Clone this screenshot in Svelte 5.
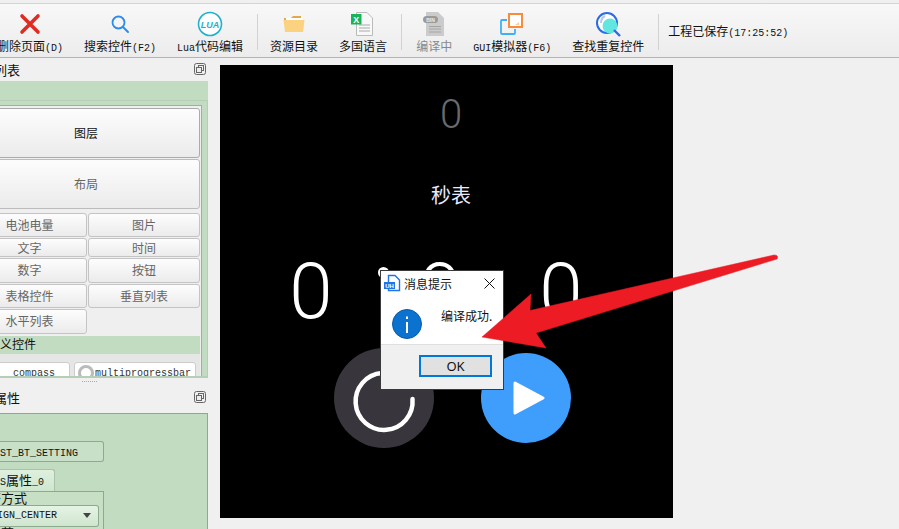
<script>
	const smallButtons = ['电池电量', '图片', '文字', '时间', '数字', '按钮', '表格控件', '垂直列表', '水平列表'];
	const heights = [24, 24, 19, 19, 25, 25, 24, 24, 25];
</script>

{#snippet dockIcon()}
	<svg class="dock" width="12" height="12" viewBox="0 0 12 12">
		<rect x="0.5" y="0.5" width="11" height="11" rx="2" fill="none" stroke="#666" />
		<rect x="4.5" y="2.5" width="5" height="5" fill="none" stroke="#666" />
		<rect x="2.5" y="4.5" width="5" height="5" fill="#eee" stroke="#666" />
	</svg>
{/snippet}

<div class="page">
	<header class="toolbar">
		<div class="tool first">
			<div class="ico">
				<svg width="22" height="22" viewBox="0 0 22 22">
					<path d="M3 3 L19 19 M19 3 L3 19" stroke="#e02b20" stroke-width="3.6" stroke-linecap="round" />
				</svg>
			</div>
			<span>删除页面<i>(D)</i></span>
		</div>
		<div class="tool">
			<div class="ico">
				<svg width="20" height="20" viewBox="0 0 20 20">
					<circle cx="8.5" cy="8.5" r="6" fill="none" stroke="#2b8cf0" stroke-width="1.8" />
					<path d="M13 13 L18 18" stroke="#2b8cf0" stroke-width="2" stroke-linecap="round" />
				</svg>
			</div>
			<span>搜索控件<i>(F2)</i></span>
		</div>
		<div class="tool">
			<div class="ico">
				<svg width="26" height="26" viewBox="0 0 26 26">
					<circle cx="13" cy="13" r="11.5" fill="#fff" stroke="#1fb0cf" stroke-width="1.6" />
					<text x="13" y="16.5" class="lua">LUA</text>
				</svg>
			</div>
			<span><i>Lua</i>代码编辑</span>
		</div>
		<div class="sep"></div>
		<div class="tool">
			<div class="ico">
				<svg width="22" height="20" viewBox="0 0 22 20">
					<path d="M1 4 H8 L10 2 H18 V6 H1 Z" fill="#e0a94a" />
					<rect x="3" y="4" width="16" height="8" fill="#fff" />
					<path d="M0.5 6 H21.5 L20 18 H2 Z" fill="#fbd27f" />
				</svg>
			</div>
			<span>资源目录</span>
		</div>
		<div class="tool">
			<div class="ico">
				<svg width="24" height="26" viewBox="0 0 24 26">
					<path d="M5.5 1.5 H16 L21.5 7 V24.5 H5.5 Z" fill="#f8f8f8" stroke="#bbb" />
					<path d="M8 14 H19 M8 17 H19 M8 20 H19" stroke="#aaa" />
					<rect x="0" y="3" width="10.5" height="10.5" fill="#19b35a" />
					<text x="5.2" y="11.5" class="xls">X</text>
				</svg>
			</div>
			<span>多国语言</span>
		</div>
		<div class="sep"></div>
		<div class="tool off">
			<div class="ico">
				<svg width="22" height="24" viewBox="0 0 22 24">
					<path d="M3 0 H15 L21 6 V24 H3 Z" fill="#cbcbcb" />
					<rect x="0" y="4" width="15" height="7" rx="3.5" fill="#9a9a9a" />
					<text x="7.5" y="9.8" class="bin">BIN</text>
					<path d="M6 14.5 H18 M6 17 H18 M6 20 H18" stroke="#a4a4a4" />
				</svg>
			</div>
			<span>编译中</span>
		</div>
		<div class="tool">
			<div class="ico">
				<svg width="24" height="24" viewBox="0 0 24 24">
					<path d="M7 8 H2 Q1 8 1 9 V21 Q1 22 2 22 H14 Q15 22 15 21 V17" fill="none" stroke="#3fb0f5" stroke-width="1.8" />
					<rect x="9" y="2" width="13" height="13" fill="#fff" stroke="#fa8a3c" stroke-width="2" />
					<path d="M19 10 V13 H15 Z" fill="#fbd0a8" />
				</svg>
			</div>
			<span><i>GUI</i>模拟器<i>(F6)</i></span>
		</div>
		<div class="tool">
			<div class="ico">
				<svg width="26" height="26" viewBox="0 0 26 26">
					<circle cx="12" cy="12" r="10" fill="#fff" stroke="#2a6be8" stroke-width="2" />
					<circle cx="15" cy="15" r="7.5" fill="#62e6df" />
					<path d="M6 12 Q6 7 10 5" fill="none" stroke="#b9c6ee" stroke-width="2" />
					<path d="M19 19 L25 25" stroke="#2a6be8" stroke-width="2.4" />
				</svg>
			</div>
			<span>查找重复控件</span>
		</div>
		<div class="sep"></div>
		<div class="saved">工程已保存<i>(17:25:52)</i></div>
	</header>

	<main class="body">
		<aside class="side">
			<div class="paneltitle"><span>列表</span>{@render dockIcon()}</div>
			<div class="band"></div>
			<div class="listframe">
				<div class="listinner">
					<button class="big dark">图层</button>
					<button class="big">布局</button>
					<div class="smalls">
						{#each smallButtons as label, i}
							<button style="height: {heights[i]}px">{label}</button>
						{/each}
					</div>
					<div class="custom">义控件</div>
					<div class="customrow">
						<button class="cbtn one"><i>compass</i></button>
						<button class="cbtn two"><b class="knob"></b><i>multiprogressbar</i></button>
					</div>
				</div>
			</div>
			<div class="grip"></div>
			<div class="paneltitle props"><span>属性</span>{@render dockIcon()}</div>
			<div class="propframe">
				<div class="dash"></div>
				<div class="idbox"><i>ST_BT_SETTING</i></div>
				<div class="tab"><i>S</i>属性<i>_0</i></div>
				<div class="tabpane">
					<div class="lbl">齐方式</div>
					<div class="select"><i>IGN_CENTER</i><b class="caret"></b></div>
					<div class="lbl">的落</div>
				</div>
			</div>
		</aside>

		<section class="stage">
			<div class="tiny">0</div>
			<div class="title">秒表</div>
			<div class="num n1">0</div>
			<div class="colon"></div>
			<div class="num n2">0</div>
			<div class="num n3">0</div>
			<div class="reset">
				<svg width="100" height="100" viewBox="0 0 100 100">
					<path d="M78.5 51 A28.5 28.5 0 1 1 48 25" fill="none" stroke="#fff" stroke-width="4.5" stroke-linecap="round" />
				</svg>
			</div>
			<div class="play">
				<svg width="34" height="36" viewBox="0 0 34 36">
					<path d="M3 3 L31 18 L3 33 Z" fill="#fff" stroke="#fff" stroke-width="3" stroke-linejoin="round" />
				</svg>
			</div>
		</section>
	</main>

	<div class="dialog">
		<div class="dlgtitle">
			<svg width="18" height="18" viewBox="0 0 18 18">
				<path d="M5.5 1.5 H12 L16.5 6 V16.5 H5.5 Z" fill="#fff" stroke="#1f74e8" stroke-width="1.4" />
				<rect x="1" y="8" width="11" height="7" fill="#1f74e8" />
				<text x="6.5" y="13.5" class="uh">UH</text>
			</svg>
			<span>消息提示</span>
			<svg class="close" width="11" height="11" viewBox="0 0 11 11">
				<path d="M0.5 0.5 L10.5 10.5 M10.5 0.5 L0.5 10.5" stroke="#111" stroke-width="1" />
			</svg>
		</div>
		<div class="dlgbody">
			<svg class="info" width="30" height="30" viewBox="0 0 30 30">
				<circle cx="15" cy="15" r="14.5" fill="#0b72cf" stroke="#0a5ca6" />
				<rect x="14" y="13" width="2" height="11" fill="#fff" />
				<rect x="14" y="7.5" width="2" height="2.5" fill="#fff" />
			</svg>
			<div class="msg">编译成功.</div>
		</div>
		<div class="dlgfoot"><button class="ok">OK</button></div>
	</div>

	<svg class="arrow" width="899" height="529" viewBox="0 0 899 529">
		<path
			d="M482 337 L531 294 L530 310.5 L774 255 Q779 255 777 259 L536 333 L546 348 Z"
			fill="#ed1c24"
			stroke="#ed1c24"
			stroke-width="0.5"
			stroke-linejoin="round"
		/>
	</svg>
</div>

<style>
	:global(body) {
		margin: 0;
		background: #f0f0f0;
	}

	.page {
		position: relative;
		width: 899px;
		height: 529px;
		overflow: hidden;
		background: #f0f0f0;
		font-family: 'Noto Sans CJK SC', sans-serif;
		font-size: 12px;
		color: #111;
	}

	i {
		font-family: 'Liberation Mono', monospace;
		font-style: normal;
		font-size: 10px;
	}

	.toolbar {
		display: flex;
		align-items: flex-start;
		gap: 21px;
		height: 53px;
		margin-top: 3px;
		border-top: 1px solid #d4d4d4;
		border-bottom: 1px solid #b4b4b4;
		background: linear-gradient(#f8f8f8, #ececec);
	}

	.tool {
		display: flex;
		flex-direction: column;
		align-items: center;
		white-space: nowrap;
		flex: none;
	}

	.tool.first {
		margin-left: -3px;
	}

	.tool.off {
		margin-left: 2px;
		color: #888;
	}

	.tool span {
		line-height: 12px;
	}

	.ico {
		display: flex;
		align-items: center;
		justify-content: center;
		height: 32px;
		margin-top: 4px;
	}

	.sep {
		width: 1px;
		height: 36px;
		margin: 10px -9px 0 -7px;
		background: #d2d2d2;
		flex: none;
	}

	.saved {
		margin: 19px 0 0 -3px;
		line-height: 16px;
		white-space: nowrap;
	}

	.body {
		display: flex;
		align-items: flex-start;
	}

	.side {
		width: 208px;
		flex: none;
		overflow: hidden;
	}

	.paneltitle {
		display: flex;
		align-items: center;
		justify-content: space-between;
		height: 23px;
		font-size: 13px;
		margin-left: -6px;
		padding-right: 2px;
	}

	.paneltitle.props {
		height: 27px;
		padding-bottom: 5px;
		box-sizing: border-box;
	}

	.dock {
		flex: none;
		margin-top: -1px;
	}

	.band {
		height: 19px;
		background: #c1dcc0;
	}

	.listframe {
		height: 278px;
		border: solid #b6ceb6;
		border-width: 1px 1px 2px 0;
		background: #c1dcc0;
		padding: 4px 5px 0 0;
		box-sizing: border-box;
		overflow: hidden;
	}

	.listinner {
		height: 273px;
		background: #efefef;
		border: solid #a9a9a9;
		border-width: 1px 1px 0 0;
		margin-left: -28px;
		padding: 2px 1px 0 0;
		box-sizing: border-box;
		overflow: hidden;
	}

	button {
		display: block;
		width: 100%;
		box-sizing: border-box;
		padding: 0 0 2px;
		border: 1px solid #c4c4c4;
		border-radius: 3px;
		background: linear-gradient(#fdfdfd, #ebebeb);
		font: inherit;
		font-size: 12px;
		color: #666;
	}

	.big {
		height: 50px;
		margin-bottom: 1px;
		border: 1px solid #bcbcbc;
	}

	.big.dark {
		color: #111;
		border-color: #ababab;
	}

	.smalls {
		display: grid;
		grid-template-columns: 115px 1fr;
		column-gap: 1px;
		row-gap: 1px;
		margin-top: 4px;
	}

	.custom {
		height: 18px;
		margin-top: 2px;
		padding-left: 28px;
		background: #c1dcc0;
		font-size: 12px;
		line-height: 15px;
		color: #111;
	}

	.customrow {
		display: flex;
		gap: 4px;
		height: 22px;
		padding: 8px 3px 0 0;
		background: #e6e6e6;
		box-sizing: border-box;
		overflow: hidden;
	}

	.cbtn {
		height: 22px;
		padding: 0;
		background: #fff;
		border-color: #ccc;
		display: flex;
		align-items: center;
		text-align: left;
		flex: none;
		color: #333;
	}

	.one {
		width: 98px;
		padding-left: 40px;
	}

	.two {
		width: 122px;
	}

	.knob {
		width: 16px;
		height: 16px;
		margin: 0 1px 0 3px;
		border: 3px solid #bbb;
		border-radius: 50%;
		box-sizing: border-box;
		flex: none;
	}

	.grip {
		width: 15px;
		height: 1px;
		margin: 3px 0 3px 82px;
		border-top: 1px dotted #aaa;
	}

	.propframe {
		height: 117px;
		background: #c1dcc0;
		border: solid #8fa98f;
		border-width: 1px 1px 0 0;
		box-sizing: border-box;
		overflow: hidden;
	}

	.dash {
		height: 27px;
	}

	.idbox {
		width: 104px;
		height: 21px;
		border: 1px solid #8fa98f;
		border-left: 0;
		border-radius: 0 3px 3px 0;
		background: #c8e0c7;
		box-sizing: border-box;
		line-height: 17px;
	}

	.tab {
		width: 55px;
		height: 22px;
		margin-top: 7px;
		border: 1px solid #a9c2a8;
		border-left: 0;
		border-bottom: 0;
		border-radius: 0 3px 0 0;
		background: linear-gradient(#dff0de, #cfe6ce);
		box-sizing: border-box;
		font-size: 13px;
		line-height: 19px;
	}

	.tabpane {
		width: 104px;
		height: 60px;
		border: 1px solid #8fa98f;
		border-left: 0;
		background: #c6dfc5;
		box-sizing: border-box;
	}

	.lbl {
		height: 13px;
		margin-left: -12px;
		font-size: 13px;
		line-height: 11px;
	}

	.select {
		display: flex;
		align-items: center;
		justify-content: space-between;
		width: 99px;
		height: 22px;
		padding: 0 7px 2px 0;
		border: 1px solid #8fa98f;
		border-left: 0;
		border-radius: 0 3px 3px 0;
		background: linear-gradient(#e6f3e5, #cfe6ce);
		box-sizing: border-box;
	}

	.select i {
		margin-left: -3px;
	}

	.caret {
		width: 0;
		border: 4px solid transparent;
		border-top: 5px solid #444;
		border-bottom: 0;
	}

	.stage {
		position: relative;
		width: 453px;
		height: 453px;
		margin: 7px 0 0 12px;
		background: #000;
		overflow: hidden;
		flex: none;
	}

	.tiny,
	.num {
		position: absolute;
		font-family: 'Roboto', sans-serif;
		font-weight: 300;
		text-align: center;
		transform: translateX(-50%);
	}

	.tiny {
		left: 231px;
		top: 26px;
		font-size: 40px;
		line-height: 48px;
		color: #6a6a6a;
	}

	.title {
		position: absolute;
		left: 211px;
		top: 116px;
		font-size: 20px;
		line-height: 28px;
		color: #eaeaff;
	}

	.num {
		top: 182px;
		font-size: 78px;
		line-height: 90px;
		color: #fff;
	}

	.n1 {
		left: 91px;
	}

	.n2 {
		left: 220px;
	}

	.n3 {
		left: 341px;
	}

	.colon {
		position: absolute;
		left: 158px;
		top: 202px;
		width: 11px;
		height: 11px;
		border-radius: 50%;
		background: #fff;
	}

	.reset {
		position: absolute;
		left: 114px;
		top: 283px;
		width: 100px;
		height: 100px;
		border-radius: 50%;
		background: #38353c;
	}

	.play {
		position: absolute;
		left: 261px;
		top: 288px;
		width: 90px;
		height: 90px;
		border-radius: 50%;
		background: #3f9dfb;
		display: flex;
		align-items: center;
		justify-content: center;
		padding-left: 5px;
		box-sizing: border-box;
	}

	.dialog {
		position: absolute;
		left: 380px;
		top: 270px;
		width: 124px;
		height: 120px;
		display: flex;
		flex-direction: column;
		background: #fff;
		box-shadow: 0 0 0 1px #3a3a3a inset;
		box-sizing: border-box;
		padding: 1px;
	}

	.dlgtitle {
		display: flex;
		align-items: center;
		gap: 3px;
		height: 24px;
		padding: 0 9px 0 2px;
	}

	.dlgtitle span {
		flex: 1;
	}

	.close {
		flex: none;
		margin-left: 1px;
		transform: translateX(1px);
	}

	.dlgbody {
		flex: 1;
		display: flex;
		gap: 19px;
		padding: 14px 0 0 11px;
		border-bottom: 1px solid #dfdfdf;
	}

	.info {
		flex: none;
	}

	.msg {
		line-height: 16px;
		white-space: nowrap;
		margin-top: -1px;
	}

	.dlgfoot {
		height: 44px;
		background: #f0f0f0;
		padding: 10px 0 0 38px;
		box-sizing: border-box;
	}

	.ok {
		width: 73px;
		height: 22px;
		padding: 0;
		border: 2px solid #0078d7;
		border-radius: 0;
		background: #e1e1e1;
		color: #111;
		font-family: 'Noto Sans', sans-serif;
		font-size: 13px;
		line-height: 16px;
	}

	.arrow {
		position: absolute;
		left: 0;
		top: 0;
		pointer-events: none;
	}

	.lua {
		font: italic bold 9px 'Liberation Sans', sans-serif;
		fill: #1fb0cf;
		text-anchor: middle;
	}

	.xls {
		font: bold 9px 'Liberation Sans', sans-serif;
		fill: #fff;
		text-anchor: middle;
	}

	.bin {
		font: bold 5px 'Liberation Sans', sans-serif;
		fill: #eee;
		text-anchor: middle;
	}

	.uh {
		font: bold 6px 'Liberation Sans', sans-serif;
		fill: #fff;
		text-anchor: middle;
	}
</style>
